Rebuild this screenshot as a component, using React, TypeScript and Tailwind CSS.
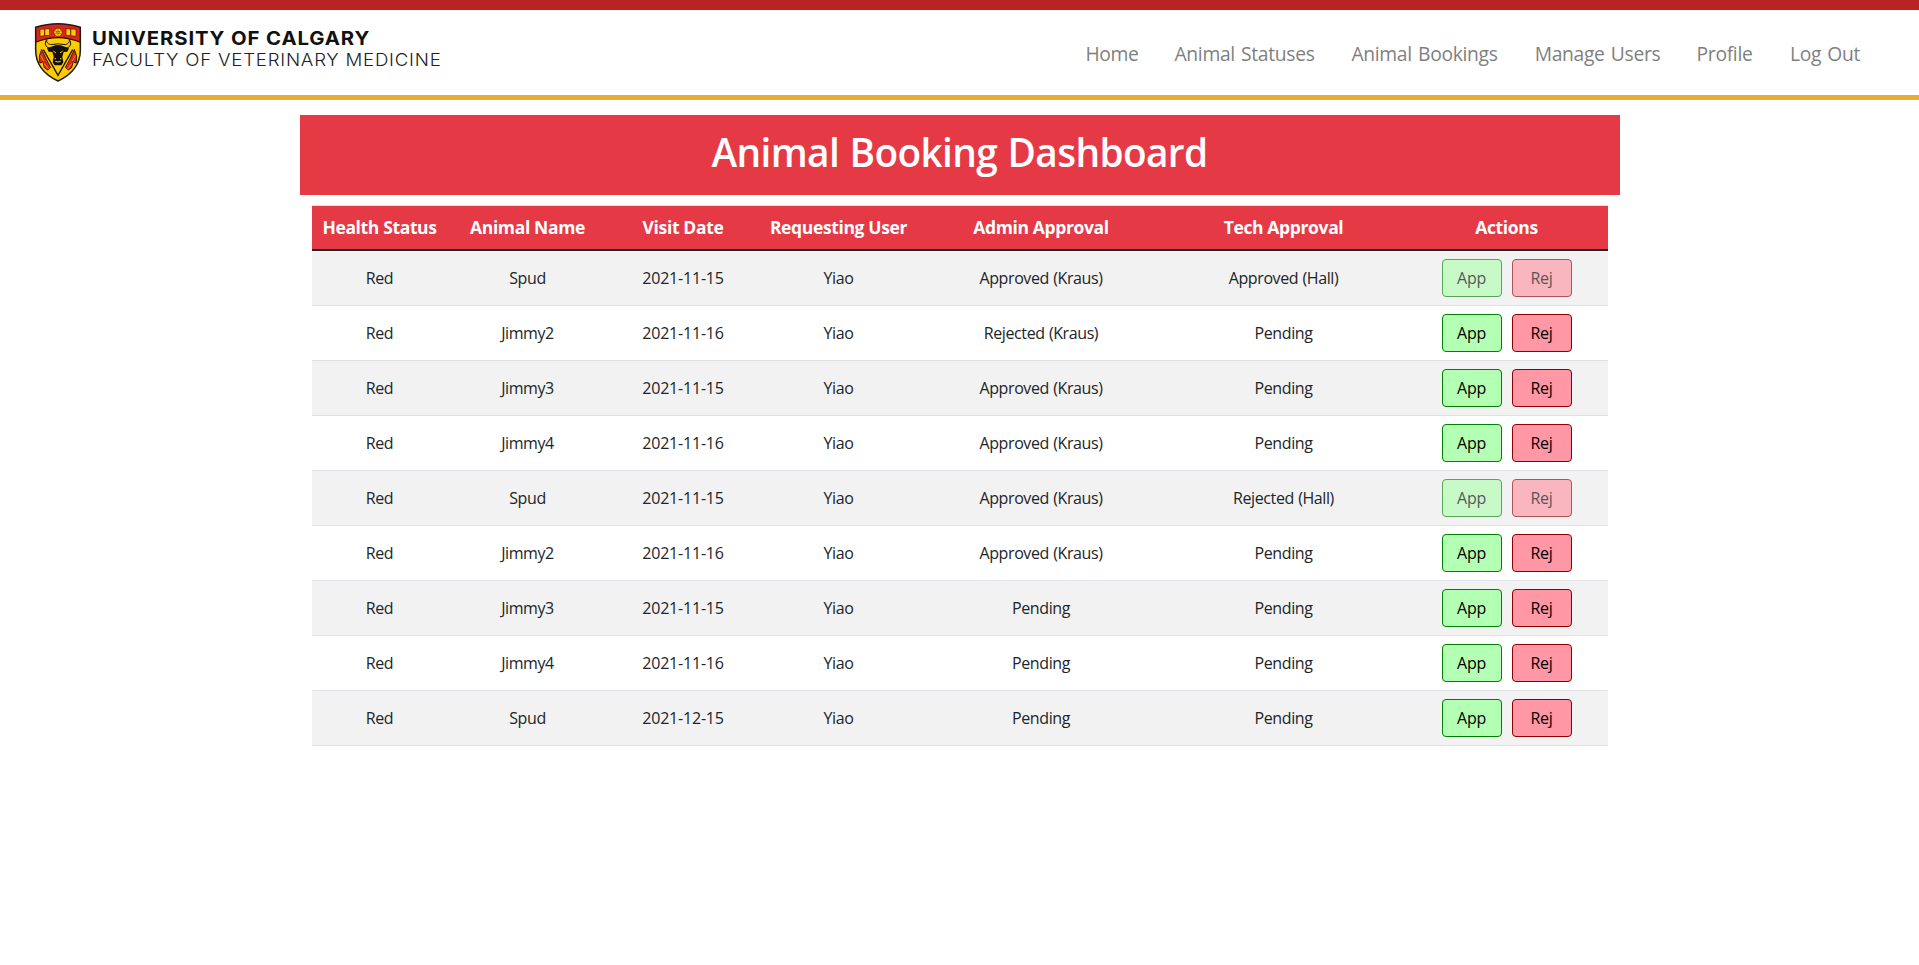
import React from "react";

type Booking = {
  name: string;
  date: string;
  admin: string;
  tech: string;
  closed?: boolean;
};

const bookings: Booking[] = [
  { name: "Spud", date: "2021-11-15", admin: "Approved (Kraus)", tech: "Approved (Hall)", closed: true },
  { name: "Jimmy2", date: "2021-11-16", admin: "Rejected (Kraus)", tech: "Pending" },
  { name: "Jimmy3", date: "2021-11-15", admin: "Approved (Kraus)", tech: "Pending" },
  { name: "Jimmy4", date: "2021-11-16", admin: "Approved (Kraus)", tech: "Pending" },
  { name: "Spud", date: "2021-11-15", admin: "Approved (Kraus)", tech: "Rejected (Hall)", closed: true },
  { name: "Jimmy2", date: "2021-11-16", admin: "Approved (Kraus)", tech: "Pending" },
  { name: "Jimmy3", date: "2021-11-15", admin: "Pending", tech: "Pending" },
  { name: "Jimmy4", date: "2021-11-16", admin: "Pending", tech: "Pending" },
  { name: "Spud", date: "2021-12-15", admin: "Pending", tech: "Pending" },
];

const columns = [
  { label: "Health Status", width: "w-[136px]" },
  { label: "Animal Name", width: "w-[160px]" },
  { label: "Visit Date", width: "w-[151px]" },
  { label: "Requesting User", width: "w-[160px]" },
  { label: "Admin Approval", width: "w-[245px]" },
  { label: "Tech Approval", width: "w-[240px]" },
  { label: "Actions", width: "w-[204px] pl-[2px]" },
];

const links = [
  { label: "Home", width: "w-[53px]" },
  { label: "Animal Statuses", width: "w-[139px]" },
  { label: "Animal Bookings", width: "w-[148px]" },
  { label: "Manage Users", width: "w-[125px]" },
  { label: "Profile", width: "w-[56px]" },
  { label: "Log Out", width: "w-[72px]" },
];

function Crest() {
  return (
    <svg viewBox="102 66 144 183" className="h-[61px] w-[48px] shrink-0" aria-hidden="true">
      <path
        d="M107 82 Q140 71 174 71 Q208 71 241 82 V150 C241 200 210 226 174 243 C138 226 107 200 107 150 Z"
        fill="#fc0"
      />
      <path d="M107 82 Q140 71 174 71 Q208 71 241 82 V127 Q208 113 174 113 Q140 113 107 127 Z" fill="#da251d" />
      <path d="M107 127 Q140 113 174 113 Q208 113 241 127" fill="none" stroke="#1a1400" strokeWidth="3.5" />
      {/* books and rose */}
      <g fill="#fc0" stroke="#5b1208" strokeWidth="2">
        <path d="M120 88 L134 87 V107 L120 109 Z M134 87 L149 86 V106 L134 107 Z" />
        <path d="M198 86 L212 87 V107 L198 106 Z M212 87 L228 88 V109 L212 107 Z" />
        <circle cx="174" cy="97" r="12.5" />
      </g>
      <path d="M174 87 V107 M165 92 L183 102 M165 102 L183 92" stroke="#b23510" strokeWidth="2" />
      <circle cx="174" cy="97" r="3.5" fill="#fc0" stroke="#5b1208" strokeWidth="1.5" />
      {/* red scrolls either side of the pile */}
      <g fill="#da251d" stroke="#2a0d00" strokeWidth="2.5">
        <path d="M125 148 L118 168 L119 188 Q123 192 128 184 L133 203 L143 210 L152 202 L140 180 Z" />
        <path d="M223 148 L230 168 L229 188 Q225 192 220 184 L215 203 L205 210 L196 202 L208 180 Z" />
      </g>
      <g fill="none" stroke="#fc0" strokeWidth="2">
        <path d="M122 166 L131 183 M133 191 L145 206" />
        <path d="M226 166 L217 183 M215 191 L203 206" />
      </g>
      <path d="M128 149 L174 229 L220 149 L206 140 L142 140 Z" fill="#fc0" />
      <path d="M130 149 L174 226 L218 149" fill="none" stroke="#1a1400" strokeWidth="4" />
      {/* bull's head */}
      <path
        d="M140 119 Q130 134 144 143 Q156 147 164 143 L184 143 Q192 147 204 143 Q218 134 208 119 Q210 130 196 134 Q174 129 152 134 Q138 130 140 119 Z"
        fill="#fc0"
        stroke="#141414"
        strokeWidth="3"
      />
      <path
        d="M158 139 Q174 131 190 139 L207 145 L202 155 L191 156 L187 170 L190 187 L184 196 H164 L158 187 L161 170 L157 156 L146 155 L141 145 Z"
        fill="#111"
      />
      <path d="M160 153 L168 159 M188 153 L180 159 M166 184 Q174 188 182 184 M164 176 H168 M180 176 H184" stroke="#fc0" strokeWidth="3" fill="none" />
      <path
        d="M107 82 Q140 71 174 71 Q208 71 241 82 V150 C241 200 210 226 174 243 C138 226 107 200 107 150 Z"
        fill="none"
        stroke="#1c1c1c"
        strokeWidth="4.5"
      />
    </svg>
  );
}

function Logo() {
  return (
    <div className="flex items-start gap-[10px] pt-[12px] pl-[34px]">
      <Crest />
      <div className="flex origin-left scale-x-106 flex-col pt-[5px] font-['Inter',sans-serif] whitespace-nowrap">
        <span className="h-[22px] text-[19.2px] leading-[22px] font-bold tracking-[0.82px] text-[#111]">
          UNIVERSITY OF CALGARY
        </span>
        <span className="h-[20px] text-[17.6px] leading-[21px] font-light tracking-[0.72px] text-[#222]">
          FACULTY OF VETERINARY MEDICINE
        </span>
      </div>
    </div>
  );
}

const buttonBase =
  "h-[38px] w-[60px] rounded-[4px] border pb-px text-[16px] leading-[24px] tracking-[-0.3px] text-black disabled:opacity-65";

export default function App() {
  return (
    <div className="min-h-screen bg-white font-['Open_Sans',sans-serif] text-[#212529]">
      <header className="flex h-[100px] justify-between border-t-[10px] border-b-[5px] border-t-[#b82424] border-b-[#e9ac35]">
        <Logo />
        <nav className="flex h-[88px] items-center gap-[36.5px] pr-[58px]">
          {links.map((link) => (
            <a
              key={link.label}
              className={`${link.width} flex justify-center text-[19.3px] tracking-[-0.32px] [word-spacing:1.5px] whitespace-nowrap text-[#7f7f7f]`}
            >
              {link.label}
            </a>
          ))}
        </nav>
      </header>
      <main className="mx-auto mt-[15px] w-[1320px]">
        <h1 className="h-[80px] bg-[#e63946] text-center text-[38.8px] leading-[75px] font-semibold tracking-[-0.65px] text-white [word-spacing:1px]">
          Animal Booking Dashboard
        </h1>
        <div className="px-3 pt-[10px]">
          <table className="w-[1296px] table-fixed border-separate border-spacing-0 text-center">
            <thead>
              <tr>
                {columns.map((column) => (
                  <th
                    key={column.label}
                    className={`${column.width} h-[46px] border-t border-b-2 border-t-[#dee2e6] border-b-[#212529] bg-[#e63946] pb-px text-[17.5px] leading-[27px] font-bold tracking-[-0.36px] whitespace-nowrap text-white`}
                  >
                    {column.label}
                  </th>
                ))}
              </tr>
            </thead>
            <tbody className="text-[16px] leading-[24px] tracking-[-0.4px] [word-spacing:0.5px] [&_td]:h-[55px] [&_td]:border-b [&_td]:border-[#dee2e6] [&_td]:p-0">
              {bookings.map((booking, index) => (
                <tr key={index} className="odd:bg-[#f2f2f2]">
                  <td>Red</td>
                  <td>{booking.name}</td>
                  <td className="tracking-[-0.2px]">{booking.date}</td>
                  <td>Yiao</td>
                  <td>{booking.admin}</td>
                  <td>{booking.tech}</td>
                  <td>
                    <div className="flex justify-center gap-[10px] pl-[2px]">
                      <button disabled={booking.closed} className={`${buttonBase} border-[#008000] bg-[#b3ffb3]`}>
                        App
                      </button>
                      <button disabled={booking.closed} className={`${buttonBase} border-[#8b0000] bg-[#ff97a5]`}>
                        Rej
                      </button>
                    </div>
                  </td>
                </tr>
              ))}
            </tbody>
          </table>
        </div>
      </main>
    </div>
  );
}
